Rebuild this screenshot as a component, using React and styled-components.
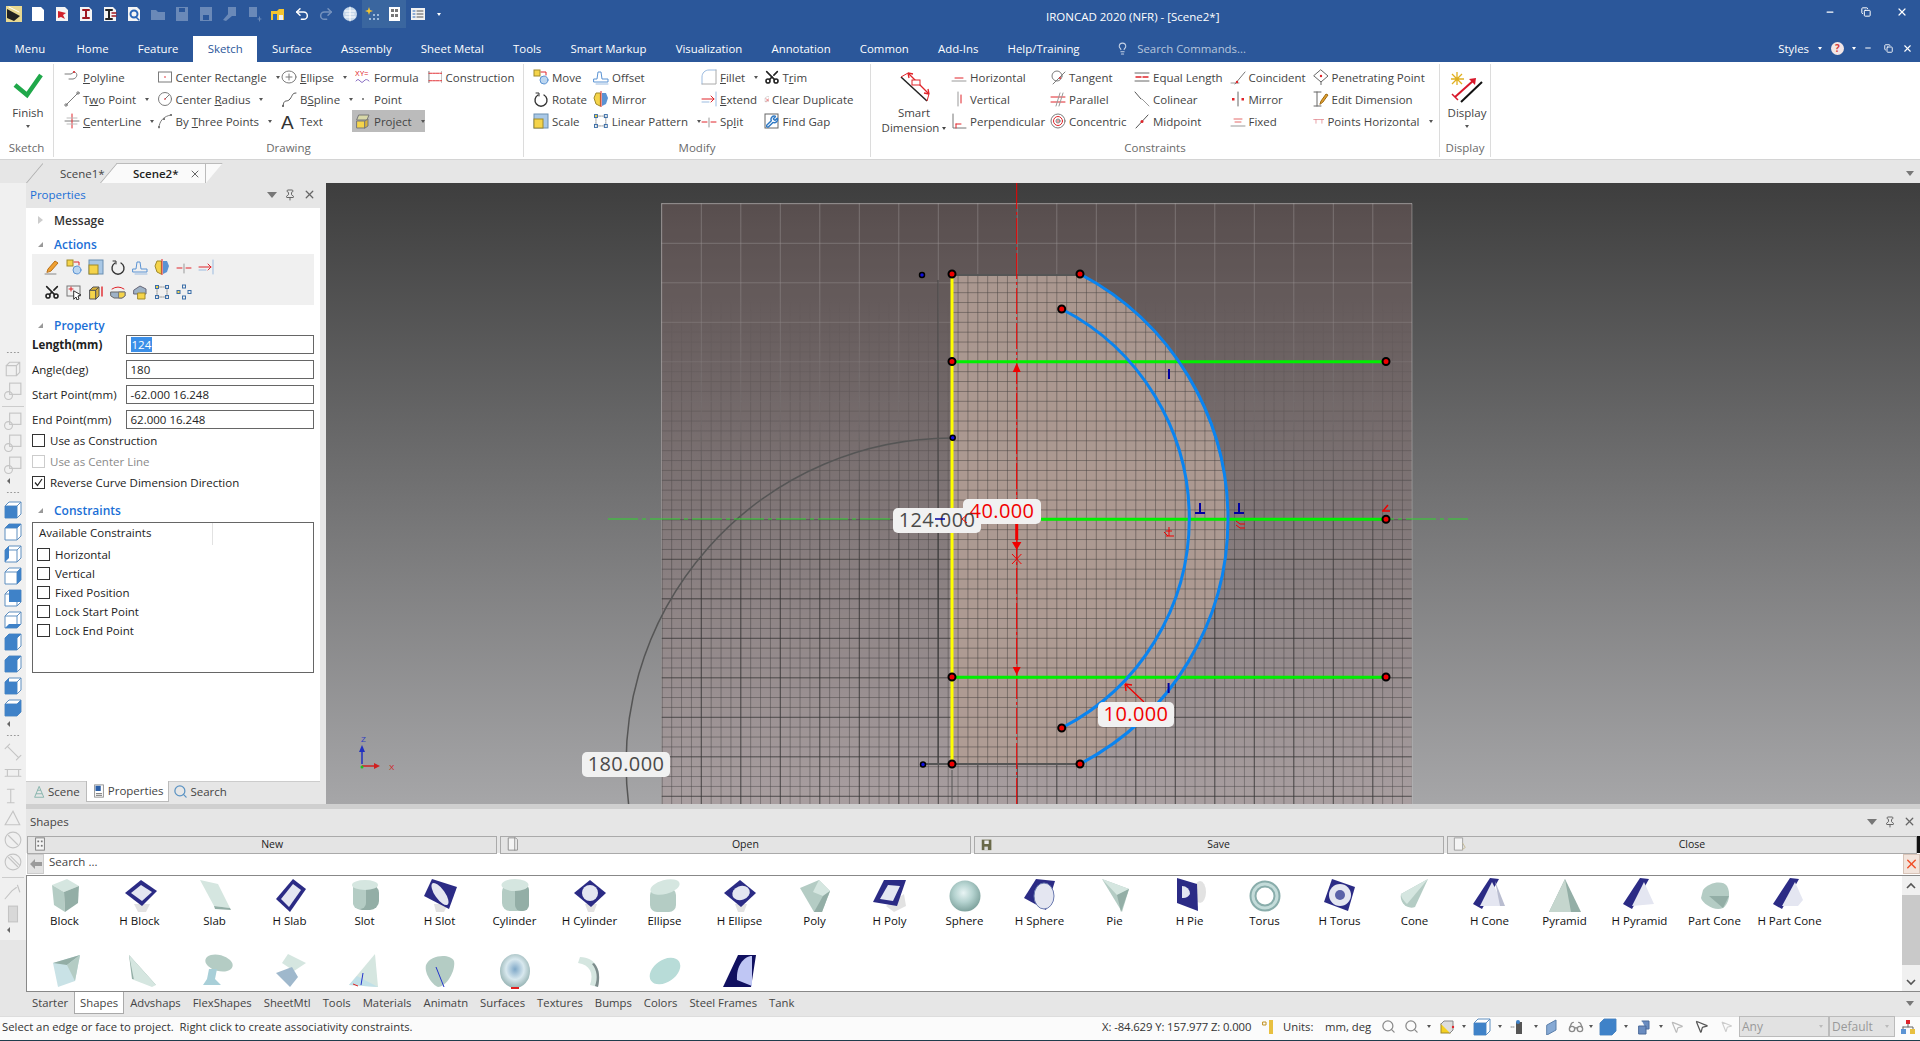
import React from "react";
import styled, { createGlobalStyle } from "styled-components";
import { Scissors, Wrench, Search, Pin, X, Lightbulb, Minus, Copy, Undo2, Redo2, Glasses, MousePointer2 } from "lucide-react";

const FONT = `"Open Sans", "Liberation Sans", sans-serif`;
const BLUE = "#2b579a";
const LINK = "#1a6fd6";

const GlobalStyle = createGlobalStyle`
  html, body { margin: 0; padding: 0; overflow: hidden; background: #e6e6e6; }
  body { font-family: ${FONT}; font-size: 11.5px; color: #333; }
  * { box-sizing: border-box; }
  u { text-underline-offset: 1px; }
`;

const Shell = styled.div`
  width: 1920px;
  height: 1041px;
  display: flex;
  flex-direction: column;
  overflow: hidden;
  border-bottom: 1px solid #1f3d4d;
`;

/* title bar */
const TitleBar = styled.div`
  height: 36px;
  flex: none;
  background: ${BLUE};
  color: #fff;
  display: grid;
  grid-template-columns: 1046px 1fr auto;
  align-items: center;
`;
const QuickBar = styled.div`
  display: flex;
  align-items: center;
  height: 28px;
  margin-bottom: 8px;
  padding-left: 2px;
`;
const QuickBtn = styled.div`
  width: ${({ $w }) => $w || 24}px;
  height: 28px;
  display: flex;
  align-items: center;
  justify-content: center;
  opacity: ${({ $faded }) => ($faded ? 0.35 : 1)};
  background: ${({ $on }) => ($on ? "#3a669f" : "transparent")};
`;
const WindowTitle = styled.div`
  font-size: 11.5px;
  margin-top: -3px;
`;
const WindowBtns = styled.div`
  display: flex;
  margin-top: -12px;
`;
const WinBtn = styled.div`
  width: ${({ $w }) => $w || 36}px;
  height: 20px;
  display: flex;
  align-items: center;
  justify-content: center;
`;

/* ribbon tabs */
const TabBar = styled.div`
  height: 26px;
  flex: none;
  background: ${BLUE};
  color: #fff;
  display: flex;
  align-items: stretch;
`;
const RibbonTab = styled.div`
  padding: 0 14.6px 2px;
  display: flex;
  align-items: center;
  font-size: 11.4px;
  white-space: nowrap;
  margin-right: ${({ $mr }) => $mr || 0}px;
  background: ${({ $active }) => ($active ? "#fff" : "transparent")};
  color: ${({ $active }) => ($active ? BLUE : "#fff")};
`;
const CommandSearch = styled.div`
  display: flex;
  align-items: center;
  gap: 8px;
  margin-left: 22px;
  padding-bottom: 2px;
  font-size: 11.4px;
  color: #b7c6dc;
`;
const TabRight = styled.div`
  margin-left: auto;
  display: flex;
  align-items: center;
  font-size: 11.4px;
  padding: 0 2px 2px 0;
`;
const HelpDot = styled.div`
  width: 13px;
  height: 13px;
  border-radius: 50%;
  background: #f3e6e6;
  color: #d33a3a;
  font-size: 10px;
  font-weight: 700;
  line-height: 13px;
  text-align: center;
  margin: 0 8px 0 9px;
`;
const Caret = styled.span`
  display: inline-block;
  flex: none;
  width: 0;
  height: 0;
  vertical-align: middle;
  margin-left: ${({ $gap }) => ($gap === undefined ? 6 : $gap)}px;
  margin-top: ${({ $mt }) => $mt || 0}px;
  border-left: ${({ $size }) => $size || 2.5}px solid transparent;
  border-right: ${({ $size }) => $size || 2.5}px solid transparent;
  border-top: ${({ $size }) => ($size ? $size + 1 : 3)}px solid ${({ $c }) => $c || "#555"};
`;

/* ribbon */
const Ribbon = styled.div`
  height: 98px;
  flex: none;
  background: #fff;
  display: flex;
  border-bottom: 1px solid #d4d4d4;
  padding-bottom: 2px;
`;
const Group = styled.div`
  width: ${({ $w }) => $w}px;
  flex: none;
  display: flex;
  flex-direction: column;
  margin-top: 2px;
  border-right: 1px solid #dcdcdc;
`;
const GroupBody = styled.div`
  height: 74px;
  flex: none;
  display: flex;
  padding: 2px 0 0 ${({ $pad }) => $pad || 0}px;
`;
const GroupLabel = styled.div`
  height: 20px;
  text-align: center;
  color: #6a6a6a;
  line-height: 20px;
`;
const Col = styled.div`
  width: ${({ $w }) => $w}px;
  flex: none;
  display: flex;
  flex-direction: column;
`;
const Cmd = styled.div`
  height: 22px;
  display: flex;
  align-items: center;
  gap: 3px;
  white-space: nowrap;
  color: #444;
  background: ${({ $on }) => ($on ? "#bbbbbb" : "transparent")};
  margin-left: ${({ $on }) => ($on ? -3 : 0)}px;
  padding-left: ${({ $on }) => ($on ? 3 : 0)}px;
  margin-right: ${({ $on }) => ($on ? 3 : 0)}px;
`;
const BigCmd = styled.div`
  width: ${({ $w }) => $w}px;
  flex: none;
  display: flex;
  flex-direction: column;
  align-items: center;
  padding-top: 1px;
  line-height: 15px;
  color: #444;
  white-space: nowrap;
`;
const BigIcon = styled.div`
  height: 38px;
  flex: none;
`;

/* document tabs */
const DocStrip = styled.div`
  height: 23px;
  flex: none;
  background: #e6e6e6;
  display: flex;
  align-items: flex-end;
  padding-left: 26px;
  position: relative;
`;
const DocTab = styled.div`
  position: relative;
  height: 20px;
  width: ${({ $w }) => $w}px;
  display: flex;
  align-items: center;
  padding-left: ${({ $pl }) => $pl}px;
  color: ${({ $active }) => ($active ? "#222" : "#444")};
  font-weight: ${({ $active }) => ($active ? 600 : 400)};
  &::before {
    content: "";
    position: absolute;
    inset: 0;
    transform-origin: bottom left;
    transform: skewX(-40deg);
    border-left: 1px solid #aaa;
    border-top: 1px solid ${({ $active }) => ($active ? "#bbb" : "transparent")};
    background: ${({ $active }) => ($active ? "#fafafa" : "transparent")};
  }
  &::after {
    content: "";
    display: ${({ $active }) => ($active ? "block" : "none")};
    position: absolute;
    top: 0;
    bottom: 0;
    left: 50%;
    right: 0;
    background: #fafafa;
    border-top: 1px solid #bbb;
    border-right: 1px solid #bbb;
  }
`;
const DocText = styled.span`
  position: relative;
  z-index: 1;
`;
const DocClose = styled.span`
  position: absolute;
  z-index: 1;
  right: 5px;
  top: 5px;
  display: flex;
`;
const StripCaret = styled.div`
  position: absolute;
  display: flex;
  right: 6px;
  top: ${({ $top }) => $top}px;
`;

/* work area */
const Work = styled.div`
  flex: 1;
  display: flex;
  min-height: 0;
`;
const LeftStrip = styled.div`
  width: 26px;
  flex: none;
  background: #e6e6e6;
`;
const ToolColumn = styled.div`
  height: 757px;
  background: #f0f0f0;
  padding-top: 163px;
  display: flex;
  flex-direction: column;
  align-items: center;
`;
const ToolDots = styled.div`
  width: 14px;
  height: 12px;
  flex: none;
  margin-bottom: ${({ $mb }) => $mb || 0}px;
  background: radial-gradient(circle, #999 0.8px, transparent 1px) 0 center / 3.5px 3px repeat-x;
`;
const ToolBtn = styled.div`
  width: 22px;
  height: 22px;
  flex: none;
  display: flex;
  align-items: center;
  justify-content: center;
`;
const ToolSep = styled.div`
  width: 22px;
  height: 8px;
  flex: none;
  background: linear-gradient(#ccc, #ccc) center / 100% 1px no-repeat;
`;
const ToolArrow = styled.div`
  height: 10px;
  flex: none;
  width: 14px;
  display: flex;
  align-items: center;
  justify-content: flex-start;
  &::before {
    content: "";
    border-top: 3px solid transparent;
    border-bottom: 3px solid transparent;
    border-right: 3px solid #666;
    margin-left: 1px;
  }
`;
const Content = styled.div`
  flex: 1;
  display: flex;
  flex-direction: column;
  min-width: 0;
`;
const TopRow = styled.div`
  height: 626px;
  flex: none;
  display: flex;
  border-bottom: 5px solid #cfcfcf;
`;

/* properties */
const PropsPanel = styled.div`
  width: 300px;
  flex: none;
  background: #e6e6e6;
  padding-right: 6px;
  display: flex;
  flex-direction: column;
`;
const PanelHead = styled.div`
  height: ${({ $h }) => $h || 25}px;
  flex: none;
  display: flex;
  align-items: center;
  padding: 0 0 2px 4px;
  color: ${({ $c }) => $c || "#444"};
`;
const PanelBtns = styled.div`
  margin-left: auto;
  display: flex;
  align-items: center;
  gap: 7px;
  padding-right: 4px;
`;
const PropsBody = styled.div`
  flex: 1;
  background: #fff;
  padding: 2px 6px 0;
  display: flex;
  flex-direction: column;
`;
const SectionHead = styled.div`
  height: ${({ $h }) => $h || 20}px;
  flex: none;
  margin-top: ${({ $mt }) => $mt || 0}px;
  display: flex;
  align-items: center;
  font-weight: 600;
  font-size: 12px;
  padding-left: 4px;
  gap: 10px;
  color: ${({ $plain }) => ($plain ? "#333" : LINK)};
`;
const Tri = styled.span`
  width: 0;
  height: 0;
  flex: none;
  ${({ $open }) =>
    $open
      ? `border-left: 5px solid transparent; border-bottom: 5px solid #999; margin-left: 2px; margin-right: 1px;`
      : `border-top: 4px solid transparent; border-bottom: 4px solid transparent; border-left: 5px solid #ccc; margin-left: 2px; margin-right: 1px;`}
`;
const ActionBar = styled.div`
  height: 51px;
  flex: none;
  background: #f0f0f0;
  display: grid;
  grid-template-columns: repeat(8, 22px);
  grid-auto-rows: 25px;
  padding-left: 9px;
  align-items: center;
  justify-items: center;
`;
const FieldRow = styled.div`
  height: 19px;
  flex: none;
  display: flex;
  align-items: center;
  margin-bottom: 6px;
  font-weight: ${({ $bold }) => ($bold ? 700 : 400)};
  color: #222;
`;
const FieldLabel = styled.div`
  width: 93.5px;
  flex: none;
  white-space: nowrap;
`;
const FieldBox = styled.div`
  flex: 1;
  height: 19px;
  border: 1px solid #666;
  display: flex;
  align-items: center;
  padding-left: 4px;
  font-weight: 400;
  background: #fff;
`;
const Selected = styled.span`
  background: #3b8fe8;
  color: #fff;
  padding: 0 1px;
`;
const CheckGroup = styled.div`
  margin-top: -5px;
  flex: none;
`;
const CheckRow = styled.div`
  height: 21px;
  display: flex;
  align-items: center;
  gap: 5px;
  color: ${({ $off }) => ($off ? "#8a8a8a" : "#222")};
`;
const Check = styled.span`
  width: 13px;
  height: 13px;
  flex: none;
  border: 1px solid ${({ $off }) => ($off ? "#ccc" : "#333")};
  background: #fff;
  display: flex;
  align-items: center;
  justify-content: center;
`;
const ConstraintBox = styled.div`
  height: 151px;
  flex: none;
  margin-top: 1.5px;
  border: 1px solid #666;
  color: #222;
`;
const BoxHead = styled.div`
  height: 22.5px;
  width: 180px;
  display: flex;
  align-items: center;
  padding: 0 0 2px 6px;
  border-right: 1px solid #e2e2e2;
`;
const BoxRow = styled.div`
  height: 19px;
  display: flex;
  align-items: center;
  gap: 5px;
  padding-left: 4px;
`;
const PanelTabs = styled.div`
  height: 23px;
  flex: none;
  display: flex;
  align-items: flex-start;
  padding-left: 4px;
  border-top: 1px solid #ccc;
  color: #444;
`;
const PanelTab = styled.div`
  height: 21px;
  display: flex;
  align-items: center;
  gap: 2px;
  padding: 0 5px 1px ${({ $pl }) => $pl || 5}px;
  margin-top: ${({ $active }) => ($active ? -1 : 0)}px;
  background: ${({ $active }) => ($active ? "#fff" : "transparent")};
  border: 1px solid ${({ $active }) => ($active ? "#bbb" : "transparent")};
  border-top: 0;
`;

/* viewport */
const Viewport = styled.div`
  flex: 1;
  position: relative;
  overflow: hidden;
  background: linear-gradient(#3e3e3e, #a6a6a8);
`;
const SceneSvg = styled.svg`
  position: absolute;
  inset: 0;
  display: block;
  z-index: ${({ $top }) => ($top ? 3 : 0)};
`;
const DimLabel = styled.div`
  position: absolute;
  left: ${({ $x }) => $x - 326}px;
  top: ${({ $y }) => $y - 183}px;
  width: ${({ $w }) => $w}px;
  height: 25px;
  display: flex;
  align-items: center;
  justify-content: center;
  &::before {
    content: "";
    position: absolute;
    inset: 0;
    border-radius: 5px;
    background: #f1f1f1;
    z-index: 1;
  }
`;
const DimText = styled.span`
  position: relative;
  z-index: 2;
  top: -1.5px;
  font-size: 20px;
  letter-spacing: 0.4px;
  color: ${({ $c }) => $c || "#4a4a4a"};
`;

/* shapes panel */
const ShapesPanel = styled.div`
  flex: 1;
  display: flex;
  flex-direction: column;
  background: #e6e6e6;
`;
const ButtonRow = styled.div`
  height: 17px;
  flex: none;
  display: grid;
  grid-template-columns: repeat(4, 1fr);
  gap: 3px;
  padding-left: 1px;
  border-right: 3px solid #111;
`;
const LibButton = styled.div`
  position: relative;
  border: 1px solid #aaa;
  background: #e4e4e4;
  display: flex;
  align-items: center;
  justify-content: center;
  padding: 0 0 2px 20px;
  font-size: 10.5px;
  color: #222;
`;
const LibIcon = styled.span`
  position: absolute;
  left: 5px;
  top: 0;
  display: flex;
`;
const SearchRow = styled.div`
  height: 22px;
  flex: none;
  background: #fff;
  display: flex;
  align-items: center;
  gap: 5px;
  padding-left: 1px;
  color: #444;
`;
const SearchText = styled.span`
  position: relative;
  top: -3px;
`;
const BackBtn = styled.div`
  width: 17px;
  height: 20px;
  background: #e2e2e2;
  border: 1px solid #ccc;
  display: flex;
  align-items: center;
  justify-content: center;
`;
const ClearBtn = styled.div`
  margin-left: auto;
  width: 17px;
  height: 20px;
  background: #f2e4dc;
  border: 1px solid #d8c4b8;
  display: flex;
  align-items: center;
  justify-content: center;
`;
const ShapeArea = styled.div`
  height: 117px;
  flex: none;
  background: #fff;
  display: flex;
  border-top: 1px solid #888;
  border-bottom: 1px solid #888;
  border-left: 1px solid #888;
  overflow: hidden;
`;
const ShapeGrid = styled.div`
  flex: 1;
  display: grid;
  grid-template-columns: repeat(24, 75px);
  grid-auto-rows: 75px;
`;
const ShapeItem = styled.div`
  display: flex;
  flex-direction: column;
  align-items: center;
  font-size: 11.5px;
  color: #111;
  white-space: nowrap;
  line-height: 15px;
`;
const ShapeArt = styled.svg`
  display: block;
  flex: none;
  margin-bottom: -3px;
`;
const ScrollBar = styled.div`
  width: 18px;
  flex: none;
  background: #f0f0f0;
  display: flex;
  flex-direction: column;
  align-items: center;
`;
const ScrollArrow = styled.div`
  height: 19px;
  flex: none;
  display: flex;
  align-items: center;
  margin-top: ${({ $end }) => ($end ? "auto" : 0)};
`;
const ScrollThumb = styled.div`
  width: 100%;
  height: 70px;
  flex: none;
  background: #c9c9c9;
`;
const LibTabs = styled.div`
  height: 24px;
  flex: none;
  display: flex;
  align-items: flex-start;
  color: #444;
  font-size: 11.3px;
  position: relative;
`;
const LibTab = styled.div`
  height: 22px;
  display: flex;
  align-items: center;
  padding: 0 5px;
  background: ${({ $active }) => ($active ? "#fff" : "transparent")};
  border: 1px solid ${({ $active }) => ($active ? "#aaa" : "transparent")};
  border-top: 0;
`;

/* status bar */
const StatusBar = styled.div`
  height: 24px;
  flex: none;
  background: #fbfbfb;
  border-top: 1px solid #ddd;
  display: flex;
  align-items: center;
  padding: 0 0 4px 2px;
  color: #333;
  font-size: 11.3px;
  white-space: nowrap;
`;
const StatusRight = styled.div`
  margin-left: auto;
  display: flex;
  align-items: center;
`;
const StatusCell = styled.div`
  width: ${({ $w }) => $w}px;
  flex: none;
  display: flex;
  align-items: center;
  justify-content: ${({ $left }) => ($left ? "flex-start" : "center")};
  letter-spacing: ${({ $tight }) => ($tight ? "-0.1px" : "normal")};
`;
const SelectBox = styled.div`
  width: ${({ $w }) => $w}px;
  height: 21px;
  flex: none;
  background: #e2e2e2;
  border: 1px solid #bbb;
  color: #999;
  display: flex;
  align-items: center;
  justify-content: space-between;
  padding: 0 5px 0 2px;
  font-size: 12px;
`;

/* drawings */
const Svg = ({ s = 16, v = 16, children }) => (
  <svg width={s} height={s} viewBox={`0 0 ${v} ${v}`} fill="none" strokeLinecap="round">
    {children}
  </svg>
);
const G = "#7b7b7b";
const R = "#e0242a";
const Y = "#f5d44a";
const B = "#5b93d3";

const ICON = {
  polyline: <><path d="M1 5h6l3-2" stroke={G} /><path d="M10 3c4 0 4 6-1 7H5" stroke={G} /><circle cx="10" cy="3" r="1" fill={R} /></>,
  twoPoint: <><path d="M2 14L14 2" stroke={G} /><circle cx="2" cy="14" r="1.2" stroke={G} /><circle cx="14" cy="2" r="1.2" stroke={G} /></>,
  centerLine: <><path d="M1 8h14" stroke={G} /><path d="M8 1v14" stroke={R} /><path d="M3 5h10M3 11h10" stroke="#bbb" /></>,
  centerRect: <><rect x="1.5" y="3" width="13" height="10" stroke={G} /><circle cx="8" cy="8" r="0.8" fill={R} /></>,
  centerRadius: <><circle cx="8" cy="8" r="6.5" stroke={G} /><path d="M8 8l4-4" stroke={G} /><circle cx="8" cy="8" r="0.8" fill={R} /></>,
  threePoints: <><path d="M2 15C2 8 7 3 14 2" stroke={G} /><rect x="1" y="13" width="2" height="2" fill={G} /><rect x="6" y="5" width="2" height="2" fill={G} /><rect x="13" y="1" width="2" height="2" fill={G} /></>,
  ellipse: <><ellipse cx="8" cy="8" rx="7" ry="6" stroke={G} /><path d="M5 8h6M8 5v6" stroke={G} /></>,
  bspline: <><path d="M2 15C3 7 6 12 9 8s2-6 6-6" stroke="#555" /><circle cx="2" cy="15" r="1" fill="#555" /></>,
  formula: <><text x="0" y="7" fontSize="7" fill={R} fontFamily="Liberation Sans">XY=</text><path d="M1 12q2-3 4 0t4 0 5 0" stroke="#8a6fc4" /></>,
  point: <circle cx="8" cy="8" r="1" fill="#666" />,
  text: <text x="0" y="16" fontSize="19" fill="#333" fontFamily="Liberation Sans">A</text>,
  project: <><path d="M4 2h10l-2 5H2z" stroke="#777" fill="#d8d8a8" /><path d="M2 8h8v7H2z" fill={Y} stroke="#777" /><path d="M10 8l3-2v7l-3 2z" fill="#d9b23a" stroke="#777" /></>,
  construction: <><path d="M1 2v12M15 2v12" stroke={G} /><path d="M1 4h14M1 12h14" stroke={R} strokeDasharray="3 1" /></>,
  move: <><rect x="1" y="1" width="6" height="6" fill={Y} stroke="#a08a2a" /><circle cx="11" cy="11" r="4" fill="#bcd6f0" stroke={B} /><path d="M8 3h5v3" stroke={R} /></>,
  rotate: <><path d="M5 4a6 6 0 1 0 6 0" stroke="#333" strokeWidth="1.4" /><path d="M3 2h3v3" stroke="#333" /></>,
  scale: <><rect x="1" y="1" width="14" height="14" fill="#a9c8e6" stroke="#6b8fb2" /><rect x="1" y="6" width="9" height="9" fill={Y} stroke="#a08a2a" /></>,
  offset: <><path d="M1 13h14v-3H9L8 3H5L4 10H1z" stroke={B} /><path d="M3 15h12" stroke="#9bbbe0" /></>,
  mirror: <><path d="M7 2H3L1 7l2 6 4 2z" fill={Y} stroke="#a08a2a" /><path d="M9 2h4l2 5-2 6-4 2z" fill={B} /><path d="M8 0v16" stroke={R} /></>,
  pattern: <><path d="M4 3h8M4 13h8M3 4v8M13 4v8" stroke="#999" strokeDasharray="1.5 1" /><rect x="1.5" y="1.5" width="3" height="3" stroke="#3b6ea8" fill="#f5d44a" /><rect x="11.5" y="1.5" width="3" height="3" stroke="#3b6ea8" /><rect x="1.5" y="11.5" width="3" height="3" stroke="#3b6ea8" /><rect x="11.5" y="11.5" width="3" height="3" stroke="#3b6ea8" /></>,
  patternRound: <><rect x="6.500" y="1" width="3" height="3" stroke="#3b6ea8" /><rect x="1" y="6.500" width="3" height="3" stroke="#3b6ea8" fill="#f5d44a" /><rect x="12" y="6.500" width="3" height="3" stroke="#3b6ea8" /><rect x="6.500" y="12" width="3" height="3" stroke="#3b6ea8" /></>,
  fillet: <><path d="M1 15V8c0-4 3-7 7-7h7" stroke="#9bbbe0" /><path d="M15 1v14H1" stroke="#aaa" /></>,
  extend: <><path d="M1 8h12" stroke={R} /><path d="M10 5l3 3-3 3" stroke={R} /><path d="M15 1v14" stroke="#9bbbe0" /><path d="M1 11h7" stroke="#9bbbe0" /></>,
  split: <><path d="M1 9h5M10 9h5" stroke={R} /><path d="M8 5v9" stroke="#999" /></>,
  trim: <g transform="rotate(-90 8 8)"><g transform="scale(0.667)"><Scissors size={24} color="#222" strokeWidth={2.4} /></g></g>,
  clearDup: <><path d="M3 15V5l6-4h6v9l-5 5z" stroke="#999" /><path d="M6 7l8 8M14 7l-8 8" stroke={R} strokeWidth="1.6" /></>,
  findGap: <><rect x="1" y="1" width="13" height="14" stroke="#666" /><g transform="translate(1.5 2) scale(0.6)"><Wrench size={22} color="#2f79c4" strokeWidth={2.6} /></g></>,
  horizontal: <><path d="M1 12h14" stroke="#999" /><path d="M4 9h8" stroke={R} /></>,
  vertical: <><path d="M7 1v14" stroke="#999" /><path d="M10 4v8" stroke={R} /></>,
  perpendicular: <><path d="M2 1v14h13" stroke="#777" /><path d="M5 11h5M5 15v-4" stroke={R} /></>,
  tangent: <><circle cx="7" cy="7" r="5" stroke={G} /><path d="M3 15L15 3" stroke={G} /><circle cx="10" cy="9" r="1" fill={R} /></>,
  parallel: <><path d="M1 6h14M1 11h14" stroke={R} /><path d="M6 15L10 2M9 15l4-13" stroke="#999" /></>,
  concentric: <><circle cx="8" cy="8" r="7" stroke={G} /><circle cx="8" cy="8" r="4.5" stroke={R} /><circle cx="8" cy="8" r="2" stroke={G} /><circle cx="8" cy="8" r="0.8" fill={R} /></>,
  equal: <><path d="M1 4h14M1 12h14" stroke="#666" /><path d="M2 8h5M9 8h5" stroke={R} strokeWidth="1.4" /></>,
  colinear: <><path d="M1 1l6 7" stroke="#555" /><path d="M8 8l7 7" stroke="#999" /></>,
  midpoint: <><path d="M2 15L14 2" stroke="#555" /><circle cx="8" cy="8.5" r="1.5" fill={R} /></>,
  coincident: <><path d="M1 14h8" stroke="#999" /><path d="M5 15L15 3" stroke="#777" /><circle cx="7" cy="13" r="1.2" fill={R} /></>,
  mirrorC: <><path d="M8 1v14" stroke="#666" /><rect x="2" y="7" width="2.5" height="2.5" fill={R} /><rect x="11.5" y="7" width="2.5" height="2.5" fill={R} /></>,
  fixed: <><path d="M1 13h14" stroke="#999" /><path d="M5 9h6M4 6h8" stroke="#e46b6b" /></>,
  penetrating: <><path d="M8 1l7 6-7 6-7-6z" stroke="#666" /><circle cx="8" cy="7" r="1.2" fill={R} /><path d="M8 13v3" stroke="#666" /></>,
  editDim: <><path d="M1 1h7M1 15h7M4 1v14" stroke="#666" /><path d="M7 13l1-3 5-7 2 1-5 7z" fill="#e0a030" stroke="#a06a10" /></>,
  pointsH: <><path d="M1 6h14" stroke="#e0838a" /><path d="M4 6v5M12 6v5" stroke="#e0838a" /></>,
  pencil: <><path d="M1 15h11" stroke="#888" /><path d="M3 13l1-3 7-8 3 2-7 8z" fill="#f0a030" stroke="#b87018" /></>,
  pickBox: <><rect x="1" y="2" width="13" height="10" stroke="#777" /><path d="M3 5h4M5 3v4" stroke={R} /><path d="M8 7l7 4-3 1 1 3-2 1-1-3-2 2z" fill="#fff" stroke="#333" /></>,
  extrude: <><path d="M2 6h6v9H2z" fill={Y} stroke="#555" /><path d="M8 6l3-3v9l-3 3zM2 6l3-3h6l-3 3z" fill="#d9b23a" stroke="#555" /><path d="M14 12V3" stroke={R} strokeWidth="1.4" /></>,
  revolve: <><path d="M1 8h14v4l-3 2H4l-3-2z" fill="#9eb2c6" stroke="#666" /><path d="M9 8h6v4l-3 2H9z" fill={Y} stroke="#777" /><path d="M2 5q6-4 12 0" stroke={R} /></>,
  blend: <><path d="M2 6l6-4 6 3v5H2z" fill="#9eb2c6" stroke="#667" /><path d="M6 9h7v6H6z" fill={Y} stroke="#a08a2a" /></>,
};
const Ico = ({ n }) => <Svg>{ICON[n]}</Svg>;

const DRAWING = [
  { w: 92.5, items: [["polyline", <><u>P</u>olyline</>], ["twoPoint", <>T<u>w</u>o Point</>, true], ["centerLine", <><u>C</u>enterLine</>, true]] },
  { w: 124.5, items: [["centerRect", "Center Rectangle", true], ["centerRadius", <>Center <u>R</u>adius</>, true], ["threePoints", <>By <u>T</u>hree Points</>, true]] },
  { w: 74, items: [["ellipse", <><u>E</u>llipse</>, true], ["bspline", <>B<u>S</u>pline</>, true], ["text", "Text"]] },
  { w: 72.5, items: [["formula", "Formula"], ["point", "Point"], ["project", "Project", true, true]] },
  { w: 87, items: [["construction", "Construction"]] },
];
const MODIFY = [
  { w: 60, items: [["move", "Move"], ["rotate", "Rotate"], ["scale", "Scale"]] },
  { w: 108, items: [["offset", "Offset"], ["mirror", "Mirror"], ["pattern", "Linear Pattern", true]] },
  { w: 62.5, items: [["fillet", <><u>F</u>illet</>, true], ["extend", <><u>E</u>xtend</>], ["split", <>Sp<u>l</u>it</>]] },
  { w: 90, items: [["trim", <>T<u>r</u>im</>], ["clearDup", "Clear Duplicate"], ["findGap", "Find Gap"]] },
];
const CONSTRAINTS = [
  { w: 99, items: [["horizontal", "Horizontal"], ["vertical", "Vertical"], ["perpendicular", "Perpendicular"]] },
  { w: 84, items: [["tangent", "Tangent"], ["parallel", "Parallel"], ["concentric", "Concentric"]] },
  { w: 95.5, items: [["equal", "Equal Length"], ["colinear", "Colinear"], ["midpoint", "Midpoint"]] },
  { w: 83, items: [["coincident", "Coincident"], ["mirrorC", "Mirror"], ["fixed", "Fixed"]] },
  { w: 120, items: [["penetrating", "Penetrating Point"], ["editDim", "Edit Dimension"], ["pointsH", "Points Horizontal", true]] },
];
const ACTIONS = ["pencil", "move", "scale", "rotate", "offset", "mirror", "split", "extend", "trim", "pickBox", "extrude", "revolve", "blend", "pattern", "patternRound"];

const CmdCols = ({ cols }) =>
  cols.map((col, i) => (
    <Col key={i} $w={col.w}>
      {col.items.map(([icon, label, caret, on], j) => (
        <Cmd key={j} $on={on}>
          <Ico n={icon} />
          <span>{label}</span>
          {caret && <Caret />}
        </Cmd>
      ))}
    </Col>
  ));

const QUICK = [
  { k: "logo", art: <><rect width="16" height="16" fill="#e8d890" /><path d="M1 3l13 7-6 5-7-3z" fill="#222" /><path d="M3 1l10 5" stroke="#fff" /></> },
  { k: "new", art: <path d="M2 1h9l3 3v11H2z" fill="#fff" /> },
  { k: "a", art: <><path d="M2 1h9l3 3v11H2z" fill="#f4f4f4" /><path d="M4 5l8 2-3 2 2 4-4-2-3 1z" fill="#d0202a" /></> },
  { k: "b", art: <><path d="M2 1h9l3 3v11H2z" fill="#f4f4f4" /><path d="M5 4h6M8 4v8M5 12h6" stroke="#a01820" strokeWidth="2" /></> },
  { k: "c", art: <><path d="M2 1h9l3 3v11H2z" fill="#f4f4f4" /><path d="M4 4h6M7 4v9M4 13h6" stroke="#222" strokeWidth="2" /><path d="M10 7h4M10 10h4" stroke="#a01820" strokeWidth="1.4" /></> },
  { k: "d", art: <><path d="M2 1h9l3 3v11H2z" fill="#f4f4f4" /><circle cx="8" cy="8" r="3.5" stroke="#2a66b8" strokeWidth="2" /><path d="M10 11l3 3" stroke="#2a66b8" strokeWidth="1.5" /></> },
  { k: "e", faded: true, art: <path d="M1 4h5l2 2h7v8H1z" fill="#dfe6f2" /> },
  { k: "f", faded: true, art: <><rect x="2" y="1" width="12" height="14" fill="#dfe6f2" /><rect x="5" y="2" width="6" height="4" fill="#2b579a" /></> },
  { k: "g", faded: true, art: <><rect x="2" y="1" width="12" height="14" fill="#dfe6f2" /><rect x="5" y="9" width="6" height="5" fill="#2b579a" /></> },
  { k: "h", faded: true, art: <><rect x="6" y="1" width="8" height="9" fill="#dfe6f2" /><path d="M1 14l6-7 3 3-6 5z" fill="#dfe6f2" /></> },
  { k: "i", faded: true, art: <><rect x="3" y="1" width="8" height="10" fill="#dfe6f2" /><path d="M12 13h3M13.500 11v4" stroke="#dfe6f2" /></> },
  { k: "j", art: <><path d="M1 5h6l2-2h5v11H1z" fill="#f4c430" /><rect x="3" y="8" width="4" height="6" fill="#2a66b8" /><rect x="9" y="9" width="4" height="5" fill="#eee" /></> },
  { k: "undo", art: <Undo2 size={16} color="#fff" strokeWidth={2.2} /> },
  { k: "redo", faded: true, art: <Redo2 size={16} color="#fff" strokeWidth={2.2} /> },
  { k: "k", art: <><circle cx="8" cy="8" r="7" fill="#c7d8ea" /><path d="M3 5h10M3 11h10M8 1v14M4 8h8" stroke="#fff" /></> },
  { k: "l", on: true, w: 22, art: <><path d="M4 1l1 3 3 1-3 1-1 3-1-3-3-1 3-1z" fill="#f4c430" /><g fill="#bcd6f0"><circle cx="9" cy="9" r="1" /><circle cx="13" cy="9" r="1" /><circle cx="5" cy="13" r="1" /><circle cx="9" cy="13" r="1" /><circle cx="13" cy="13" r="1" /></g></> },
  { k: "m", on: true, w: 22, art: <><rect x="2" y="1" width="11" height="14" fill="#fff" /><g fill="#777"><rect x="4" y="3" width="3" height="3" /><rect x="8" y="3" width="3" height="3" /><rect x="4" y="8" width="3" height="3" /><rect x="8" y="8" width="3" height="3" /></g></> },
  { k: "n", art: <><rect x="1" y="2" width="14" height="12" fill="#f2f2f2" /><path d="M3 5h2M3 8h2M3 11h2" stroke="#2a66b8" /><path d="M7 5h6M7 8h6M7 11h6" stroke="#555" /></> },
];

const Cube = ({ faces = [] }) => (
  <svg width="18" height="18" viewBox="0 0 18 18">
    <path d="M1 5h12v12H1zM1 5l4-4h12v12l-4 4M13 5l4-4" fill="#fff" stroke="#5f8fc0" />
    {faces.includes("front") && <path d="M1 5h12v12H1z" fill="#3f82c8" />}
    {faces.includes("top") && <path d="M1 5l4-4h12l-4 4z" fill="#3f82c8" />}
    {faces.includes("right") && <path d="M13 5l4-4v12l-4 4z" fill="#3f82c8" />}
    {faces.includes("left") && <path d="M1 5l4-4v12l-4 4z" fill="#3f82c8" />}
    {faces.includes("bottom") && <path d="M1 17l4-4h12l-4 4z" fill="#3f82c8" />}
    {faces.includes("back") && <path d="M5 1h12v12H5z" fill="#3f82c8" />}
  </svg>
);
const Ghost = ({ d }) => (
  <Svg s={18}>
    <g stroke="#c4c4c4" fill="none">
      {d}
    </g>
  </Svg>
);
const GhostBox = (
  <>
    <rect x="5" y="1" width="10" height="10" />
    <circle cx="4" cy="12" r="3.5" />
  </>
);

const ArtP = ({ d, c }) => <polygon points={d} fill={c} />;
const T1 = "#d5e6e0";
const T2 = "#b4ccc4";
const T3 = "#93aea6";
const NV = "#2b2b85";
const HOLE = "#e4e6f1";

const ART = {
  Block: <><ArtP d="7,9 22,3 34,10 19,16" c={T1} /><ArtP d="7,9 19,16 20,36 9,29" c={T2} /><ArtP d="19,16 34,10 33,27 20,36" c={T3} /></>,
  "H Block": <><ArtP d="14,28 30,28 26,36 18,36" c="#e2e2e2" /><ArtP d="21,4 37,15 22,30 5,17" c={NV} /><ArtP d="21,9 32,16 22,25 11,17" c={HOLE} /></>,
  Slab: <><ArtP d="5,4 23,8 35,32 19,30" c={T1} /><ArtP d="19,30 35,32 36,34 20,33" c={T3} /></>,
  "H Slab": <><ArtP d="23,3 36,13 20,36 6,23" c={NV} /><ArtP d="23,8 31,14 19,31 11,23" c={HOLE} /></>,
  Slot: <><rect x="8" y="8" width="26" height="26" rx="9" fill={T3} /><rect x="8" y="6" width="13" height="27" rx="6" fill={T2} /><ellipse cx="20" cy="9" rx="13" ry="5" fill={T1} /></>,
  "H Slot": <><ArtP d="14,28 28,28 24,36 16,36" c="#e2e2e2" /><ArtP d="12,3 37,11 29,33 4,20" c={NV} /><ellipse cx="20" cy="18" rx="5" ry="13" transform="rotate(-35 20 18)" fill={HOLE} /></>,
  Cylinder: <><rect x="7" y="8" width="27" height="27" rx="8" fill={T2} /><rect x="20" y="8" width="14" height="27" rx="6" fill={T3} /><ellipse cx="20" cy="9" rx="13.500" ry="6" fill={T1} /></>,
  "H Cylinder": <><ArtP d="15,28 27,28 24,36 18,36" c="#e2e2e2" /><ArtP d="20,4 36,17 21,31 4,17" c={NV} /><circle cx="20" cy="17" r="8" fill={HOLE} /></>,
  Ellipse: <><rect x="5" y="12" width="26" height="24" rx="7" fill={T2} /><ellipse cx="20" cy="11" rx="15" ry="7" transform="rotate(-15 20 11)" fill={T1} /></>,
  "H Ellipse": <><ArtP d="15,28 27,28 24,36 18,36" c="#e2e2e2" /><ArtP d="20,4 36,17 21,31 4,17" c={NV} /><ellipse cx="21" cy="17" rx="9" ry="7" transform="rotate(-20 21 17)" fill={HOLE} /></>,
  Poly: <><ArtP d="5,12 24,4 35,15 27,36 19,36" c={T2} /><ArtP d="24,4 35,15 28,20 18,16" c={T1} /><ArtP d="28,20 35,15 27,36 19,36" c={T3} /></>,
  "H Poly": <><ArtP d="16,30 34,18 36,30 24,36" c="#e2e2e2" /><ArtP d="14,4 36,4 27,30 3,26" c={NV} /><ArtP d="18,9 30,10 23,25 10,23" c={HOLE} /></>,
  Sphere: <><defs><radialGradient id="sph1" cx="0.45" cy="0.4" r="0.6"><stop offset="0" stopColor="#e8f4f4" /><stop offset="0.5" stopColor="#b5d3d0" /><stop offset="1" stopColor="#7fa39e" /></radialGradient></defs><circle cx="20" cy="20" r="15.500" fill="url(#sph1)" /></>,
  "H Sphere": <><ArtP d="16,3 35,5 26,34 4,22" c={NV} /><ellipse cx="24" cy="20" rx="10" ry="13" fill={HOLE} stroke="#6a7ab0" /></>,
  Pie: <><ArtP d="7,3 34,13 27,36" c={T2} /><ArtP d="7,3 34,13 22,19" c={T1} /><ArtP d="22,19 34,13 26,36" c={T3} /></>,
  "H Pie": <><ellipse cx="30" cy="16" rx="6" ry="11" fill="#e2e2e2" /><ArtP d="7,2 27,8 28,35 7,27" c={NV} /><path d="M12 10a8 8 0 0 1 8 8 8 8 0 0 1-8 4z" fill={HOLE} /></>,
  Torus: <><circle cx="20" cy="20" r="12" fill="none" stroke="#89adab" strokeWidth="7" /><circle cx="20" cy="20" r="12" fill="none" stroke="#c4dcda" strokeWidth="3" /></>,
  "H Torus": <><ArtP d="12,3 35,11 28,35 4,26" c={NV} /><circle cx="20" cy="19" r="11" fill={HOLE} /><circle cx="20" cy="19" r="5" fill="#5a62a8" /></>,
  Cone: <><path d="M33 3L6 18c-2 8 6 16 14 13z" fill={T2} /><path d="M33 3L6 18c0 4 4 8 6 10z" fill={T1} /></>,
  "H Cone": <><ArtP d="20,2 29,3 12,33 3,28" c={NV} /><ArtP d="22,6 34,30 10,30" c={HOLE} /><ArtP d="25,5 35,30 30,30" c="#b9bdd0" /></>,
  Pyramid: <><ArtP d="20,3 36,36 4,36" c={T3} /><ArtP d="20,3 26,36 4,36" c="#c5d6ce" /></>,
  "H Pyramid": <><ArtP d="20,2 29,3 12,33 3,28" c={NV} /><ArtP d="24,6 34,28 12,30" c={HOLE} /></>,
  "Part Cone": <><path d="M8 14c6-8 20-10 24-4 4 7 2 18-4 22-8 4-20-4-22-10z" fill={T2} /><path d="M14 20l14 12 6-12z" fill={T3} /></>,
  "H Part Cone": <><ArtP d="20,2 29,3 12,33 3,28" c={NV} /><path d="M25 6l8 18-5 6-16 0z" fill={HOLE} /></>,
  w1: <><ArtP d="8,12 35,4 30,30 13,36" c="#c9e2e6" /><ArtP d="8,12 35,4 22,14" c={T3} /><ArtP d="22,14 35,4 30,30" c={T2} /></>,
  w2: <><ArtP d="9,4 36,34 12,28" c={T3} /><ArtP d="9,4 36,34 32,36 14,29" c={T1} /></>,
  w3: <><ellipse cx="24" cy="12" rx="14" ry="8" transform="rotate(15 24 12)" fill={T2} /><path d="M14 18l8 0-2 10 6 6H8l4-6z" fill="#a8cfd8" /></>,
  w4: <><ArtP d="18,3 36,12 24,20 12,12" c={T1} /><ArtP d="6,22 22,16 28,26 20,36" c="#9fb8cc" /></>,
  w5: <><ArtP d="4,34 30,3 33,36" c={T1} /><ArtP d="4,34 12,25 33,36" c="#c0e0e8" /><path d="M16 34l2-12" stroke="#2233cc" /><path d="M8 33l5 2" stroke="#e02020" /></>,
  w6: <><path d="M6 14c4-10 24-12 28-4 2 10-8 26-16 26-6-2-14-14-12-22z" fill={T2} /><path d="M16 16l8 20" stroke="#2233cc" /></>,
  w7: <><defs><radialGradient id="sph2" cx="0.5" cy="0.45" r="0.6"><stop offset="0" stopColor="#7fa8c8" /><stop offset="0.5" stopColor="#d8e8ee" /><stop offset="1" stopColor="#8aa9a8" /></radialGradient></defs><ellipse cx="20" cy="20" rx="15" ry="17" fill="url(#sph2)" /><path d="M16 37h8" stroke="#e02020" strokeWidth="2" /></>,
  w8: <><path d="M10 6c16 0 22 14 18 30l-8-2c4-12 0-20-12-22z" fill={T1} /><path d="M24 12c6 6 6 16 4 24l-3-1c3-8 2-16-3-22z" fill="#7d8c8c" /></>,
  w9: <ellipse cx="20" cy="20" rx="17" ry="11" transform="rotate(-35 20 20)" fill="#b8dcd8" />,
  w10: <><ArtP d="18,4 36,4 31,36 3,36" c="#101060" /><path d="M32 5c-8 0-16 10-15 24l15 6z" fill="#bfc6f4" /></>,
};
const SHAPES_TOP = ["Block", "H Block", "Slab", "H Slab", "Slot", "H Slot", "Cylinder", "H Cylinder", "Ellipse", "H Ellipse", "Poly", "H Poly", "Sphere", "H Sphere", "Pie", "H Pie", "Torus", "H Torus", "Cone", "H Cone", "Pyramid", "H Pyramid", "Part Cone", "H Part Cone"];
const SHAPES_LOW = ["w1", "w2", "w3", "w4", "w5", "w6", "w7", "w8", "w9", "w10"];

const LIB_TABS = ["Starter", "Shapes", "Advshaps", "FlexShapes", "SheetMtl", "Tools", "Materials", "Animatn", "Surfaces", "Textures", "Bumps", "Colors", "Steel Frames", "Tank"];
const TOP_TABS = ["Home", "Feature", "Sketch", "Surface", "Assembly", "Sheet Metal", "Tools", "Smart Markup", "Visualization", "Annotation", "Common", "Add-Ins", "Help/Training"];

const PanelControls = () => (
  <PanelBtns>
    <Caret $c="#777" $gap={0} $size={5} />
    <Pin size={12} color="#666" />
    <X size={13} color="#666" strokeWidth={2.4} />
  </PanelBtns>
);

const Tick = () => (
  <svg width="11" height="11" viewBox="0 0 11 11" fill="none">
    <path d="M2 5.500l2.500 3L9 2" stroke="#222" strokeWidth="1.2" />
  </svg>
);

const PT = ({ x, y }) => <circle cx={x} cy={y} r="3.500" fill="#f00000" stroke="#000" strokeWidth="2" />;
const BD = ({ x, y }) => <circle cx={x} cy={y} r="2.500" fill="#1010e0" stroke="#000" strokeWidth="1.500" />;

const Scene = () => (
  <SceneSvg width="1594" height="621" viewBox="326 183 1594 621" fill="none">
    <defs>
      <pattern id="minorDark" x="661.3" y="203.3" width="9.875" height="9.875" patternUnits="userSpaceOnUse">
        <path d="M9.875 0H0V9.875" stroke="#222" strokeWidth="1" />
      </pattern>
      <pattern id="majorDark" x="661.3" y="203.3" width="39.5" height="39.5" patternUnits="userSpaceOnUse">
        <path d="M39.500 0H0V39.500" stroke="#1c1c1c" strokeWidth="1.200" />
      </pattern>
      <pattern id="majorLight" x="661.3" y="203.3" width="39.5" height="39.5" patternUnits="userSpaceOnUse">
        <path d="M39.500 0H0V39.500" stroke="#ffffff" strokeWidth="1" />
      </pattern>
      <linearGradient id="fadeLight" gradientUnits="userSpaceOnUse" x1="0" y1="203" x2="0" y2="500">
        <stop offset="0" stopColor="#fff" stopOpacity="0.42" />
        <stop offset="1" stopColor="#fff" stopOpacity="0.05" />
      </linearGradient>
      <linearGradient id="fadeMinor" gradientUnits="userSpaceOnUse" x1="0" y1="300" x2="0" y2="560">
        <stop offset="0" stopColor="#fff" stopOpacity="0" />
        <stop offset="1" stopColor="#fff" stopOpacity="0.68" />
      </linearGradient>
      <linearGradient id="fadeMajor" gradientUnits="userSpaceOnUse" x1="0" y1="420" x2="0" y2="600">
        <stop offset="0" stopColor="#fff" stopOpacity="0" />
        <stop offset="1" stopColor="#fff" stopOpacity="0.85" />
      </linearGradient>
      <mask id="maskLight" maskUnits="userSpaceOnUse" x="326" y="183" width="1594" height="621"><rect x="326" y="183" width="1594" height="621" fill="url(#fadeLight)" /></mask>
      <mask id="maskMinor" maskUnits="userSpaceOnUse" x="326" y="183" width="1594" height="621"><rect x="326" y="183" width="1594" height="621" fill="url(#fadeMinor)" /></mask>
      <mask id="maskMajor" maskUnits="userSpaceOnUse" x="326" y="183" width="1594" height="621"><rect x="326" y="183" width="1594" height="621" fill="url(#fadeMajor)" /></mask>
      <clipPath id="sketchClip"><path d="M952 275H1080A276.800 276.800 0 0 1 1080 764H952Z" /></clipPath>
    </defs>

    <rect x="661.3" y="203.3" width="750.7" height="601" fill="rgb(180,130,130)" fillOpacity="0.2" />
    <rect x="661.3" y="203.3" width="750.7" height="601" fill="url(#minorDark)" mask="url(#maskMinor)" />
    <rect x="661.3" y="203.3" width="750.7" height="601" fill="url(#majorDark)" mask="url(#maskMajor)" />
    <rect x="661.3" y="203.3" width="750.7" height="601" fill="url(#majorLight)" mask="url(#maskLight)" />
    <path d="M661.5 804V203.500H1412V804" stroke="#fff" strokeOpacity="0.28" />

    <path d="M952 275H1080A276.800 276.800 0 0 1 1080 764H952Z" fill="#b09c94" fillOpacity="0.92" />
    <g clipPath="url(#sketchClip)">
      <rect x="661.3" y="203.3" width="750.7" height="601" fill="url(#minorDark)" opacity="0.72" />
    </g>

    <path d="M938 280V764" stroke="#3c3c3c" strokeOpacity="0.6" strokeWidth="1.500" />
    <path d="M923 764H1080" stroke="#555" strokeWidth="2" />
    <path d="M952 275H1080" stroke="#555" strokeWidth="2" />
    <path d="M952 770V804" stroke="#555" />
    <path d="M952 438A326 326 0 0 0 628.600 804" stroke="#555" strokeWidth="1.500" />

    <path d="M608 519H1468" stroke="#2fd62f" strokeDasharray="30 4 4 4" />
    <path d="M1016.700 183V804" stroke="#f00000" strokeDasharray="26 3 3 3" />
    <path d="M1016.700 370V675" stroke="#f00000" strokeOpacity="0.5" />
    <path d="M1016.700 523V540" stroke="#f00000" strokeWidth="3" />
    <path d="M1012 542h9.400l-4.700 8zM1012.700 372h8l-4-9zM1012.700 667h8l-4 8z" fill="#f00000" />
    <path d="M1012 554l9.400 10M1021.400 554l-9.400 10" stroke="#f00000" />

    <path d="M952 361.700H1386M1041 519.300H1386M952 677.300H1386" stroke="#00f000" strokeWidth="3" />
    <path d="M952 275V764" stroke="#ffff00" strokeWidth="3" />

    <path d="M1080 274A276.800 276.800 0 0 1 1080 764" stroke="#0a84f0" strokeWidth="3" />
    <path d="M1061.700 309A235.800 235.800 0 0 1 1061.700 728" stroke="#0a84f0" strokeWidth="3" />

    <path d="M1144 702L1125 684M1125 684l1 7M1125 684l7 1" stroke="#f00000" strokeWidth="1.300" />

    <path d="M1169 369v10M1168.600 683v10" stroke="#0000a0" strokeWidth="2" />
    <path d="M1200 503v10M1195 513h10M1239 503v10M1234 513h10" stroke="#0000a0" strokeWidth="2" />
    <path d="M1164 532l4 4M1169 527v9M1166 536h8M1166 531h6" stroke="#f00000" />
    <path d="M1236 521l4 3h5M1236 525l4 3h5" stroke="#f00000" />
    <path d="M1382 511h8M1383 511l5-6" stroke="#f00000" strokeWidth="1.500" />

    <PT x={952} y={274} /><PT x={1080} y={274} /><PT x={1061.7} y={309} />
    <PT x={952} y={361.5} /><PT x={1386} y={361.5} /><PT x={1386} y={519.3} />
    <PT x={952} y={677} /><PT x={1386} y={677} /><PT x={1061.7} y={728} />
    <PT x={952} y={764} /><PT x={1080} y={764} />
    <BD x={922} y={275} /><BD x={952.7} y={437.7} /><BD x={923} y={764.5} />

    <path d="M362 764V748" stroke="#2030c0" strokeWidth="1.500" />
    <path d="M359 752l3-7 3 7z" fill="#2030c0" />
    <path d="M362 766h14" stroke="#d02020" strokeWidth="1.500" />
    <path d="M374 763l6 3-6 3z" fill="#d02020" />
    <circle cx="362" cy="767" r="1.500" fill="#20c020" />
    <text x="361" y="742" fontSize="8" fill="#3040c0" fontFamily="Liberation Sans">Z</text>
    <text x="389" y="770" fontSize="8" fill="#d02020" fontFamily="Liberation Sans">X</text>
  </SceneSvg>
);

export default function App() {
  return (
    <>
      <GlobalStyle />
      <Shell>
        <TitleBar>
          <QuickBar>
            {QUICK.map((q) => (
              <QuickBtn key={q.k} $faded={q.faded} $on={q.on} $w={q.w}>
                <Svg>{q.art}</Svg>
              </QuickBtn>
            ))}
            <QuickBtn $w={18}>
              <Caret $c="#fff" $gap={0} />
            </QuickBtn>
          </QuickBar>
          <WindowTitle>IRONCAD 2020 (NFR) - [Scene2*]</WindowTitle>
          <WindowBtns>
            <WinBtn><Minus size={10} color="#fff" strokeWidth={3} /></WinBtn>
            <WinBtn><Copy size={10} color="#fff" strokeWidth={2.4} /></WinBtn>
            <WinBtn><X size={12} color="#fff" strokeWidth={2.4} /></WinBtn>
          </WindowBtns>
        </TitleBar>

        <TabBar>
          <RibbonTab $mr={2}>Menu</RibbonTab>
          {TOP_TABS.map((t) => (
            <RibbonTab key={t} $active={t === "Sketch"}>{t}</RibbonTab>
          ))}
          <CommandSearch>
            <Lightbulb size={13} color="#c5d2e6" />
            Search Commands...
          </CommandSearch>
          <TabRight>
            Styles
            <Caret $c="#fff" $gap={9} />
            <HelpDot>?</HelpDot>
            <Caret $c="#fff" $gap={0} />
            <WinBtn $w={24}><Minus size={8} color="#fff" strokeWidth={3} /></WinBtn>
            <WinBtn $w={16}><Copy size={9} color="#fff" strokeWidth={2.4} /></WinBtn>
            <WinBtn $w={22}><X size={11} color="#fff" strokeWidth={2.4} /></WinBtn>
          </TabRight>
        </TabBar>

        <Ribbon>
          <Group $w={54}>
            <GroupBody $pad={2}>
              <BigCmd $w={52}>
                <BigIcon>
                  <svg width="34" height="40" viewBox="0 0 34 40" fill="none">
                    <path d="M4 18l12 10L30 8" stroke="#1fa84a" strokeWidth="4.500" />
                  </svg>
                </BigIcon>
                Finish
                <Caret $gap={0} $mt={5} />
              </BigCmd>
            </GroupBody>
            <GroupLabel>Sketch</GroupLabel>
          </Group>
          <Group $w={470}>
            <GroupBody $pad={10}><CmdCols cols={DRAWING} /></GroupBody>
            <GroupLabel>Drawing</GroupLabel>
          </Group>
          <Group $w={347}>
            <GroupBody $pad={9}><CmdCols cols={MODIFY} /></GroupBody>
            <GroupLabel>Modify</GroupLabel>
          </Group>
          <Group $w={569}>
            <GroupBody $pad={6}>
              <BigCmd $w={74}>
                <BigIcon>
                  <svg width="40" height="40" viewBox="0 0 40 40" fill="none">
                    <path d="M7 10l26 24" stroke="#222" strokeWidth="1.500" />
                    <path d="M14 6l21 21" stroke="#e0242a" strokeWidth="1.300" />
                    <path d="M14 6l1 5M14 6l5 1M35 27l-1-5M35 27l-5-1" stroke="#e0242a" strokeWidth="1.300" />
                    <path d="M7 10l7-4M33 34l2-7" stroke="#e0242a" />
                    <rect x="18" y="13" width="8" height="5" fill="#fff" stroke="#e0242a" />
                  </svg>
                </BigIcon>
                Smart
                <span>Dimension<Caret $c="#444" $gap={3} /></span>
              </BigCmd>
              <CmdCols cols={CONSTRAINTS} />
            </GroupBody>
            <GroupLabel>Constraints</GroupLabel>
          </Group>
          <Group $w={51}>
            <GroupBody $pad={2}>
              <BigCmd $w={50}>
                <BigIcon>
                  <svg width="40" height="40" viewBox="0 0 40 40" fill="none">
                    <path d="M10 5v13M4 12h13M5 7l10 10M15 7L5 17" stroke="#e0b020" strokeWidth="1.300" />
                    <path d="M8 30L27 13" stroke="#d8182a" strokeWidth="2" />
                    <path d="M22 12l7-1-1 7z" fill="#d8182a" />
                    <path d="M5 27l6 6" stroke="#d8182a" strokeWidth="1.500" />
                    <path d="M14 35l21-20" stroke="#111" strokeWidth="2" />
                  </svg>
                </BigIcon>
                Display
                <Caret $gap={0} $mt={5} />
              </BigCmd>
            </GroupBody>
            <GroupLabel>Display</GroupLabel>
          </Group>
        </Ribbon>

        <DocStrip>
          <DocTab $w={74} $pl={34}><DocText>Scene1*</DocText></DocTab>
          <DocTab $w={106} $active $pl={33}>
            <DocText>Scene2*</DocText>
            <DocClose><X size={12} color="#666" strokeWidth={2} /></DocClose>
          </DocTab>
          <StripCaret $top={11}><Caret $c="#777" $gap={0} $size={4} /></StripCaret>
        </DocStrip>

        <Work>
          <LeftStrip>
            <ToolColumn>
              <ToolDots />
              <ToolBtn><Ghost d={<path d="M2 5h9v9H2zM2 5l3-3h9v9l-3 3M11 5l3-3" />} /></ToolBtn>
              <ToolBtn><Ghost d={GhostBox} /></ToolBtn>
              <ToolSep />
              <ToolBtn><Ghost d={GhostBox} /></ToolBtn>
              <ToolBtn><Ghost d={GhostBox} /></ToolBtn>
              <ToolBtn><Ghost d={GhostBox} /></ToolBtn>
              <ToolArrow />
              <ToolDots $mb={1} />
              <ToolBtn><Cube faces={["front"]} /></ToolBtn>
              <ToolBtn><Cube faces={["top"]} /></ToolBtn>
              <ToolBtn><Cube faces={["left"]} /></ToolBtn>
              <ToolBtn><Cube faces={["right"]} /></ToolBtn>
              <ToolBtn><Cube faces={["back"]} /></ToolBtn>
              <ToolBtn><Cube faces={["bottom"]} /></ToolBtn>
              <ToolBtn><Cube faces={["front", "top", "left"]} /></ToolBtn>
              <ToolBtn><Cube faces={["front", "top"]} /></ToolBtn>
              <ToolBtn><Cube faces={["left", "front"]} /></ToolBtn>
              <ToolBtn><Cube faces={["front", "right"]} /></ToolBtn>
              <ToolArrow />
              <ToolDots />
              <ToolBtn><Ghost d={<path d="M3 3l10 10M1 5l4-4M11 15l4-4" />} /></ToolBtn>
              <ToolBtn><Ghost d={<path d="M1 4h14M1 10h14M3 4v6M13 4v6" />} /></ToolBtn>
              <ToolBtn><Ghost d={<path d="M3 2h6M3 14h6M6 2v12" />} /></ToolBtn>
              <ToolBtn><Ghost d={<path d="M1 14L8 2l6 12z" />} /></ToolBtn>
              <ToolBtn><Ghost d={<><circle cx="8" cy="8" r="7" /><path d="M4 4l8 8" /></>} /></ToolBtn>
              <ToolBtn><Ghost d={<><circle cx="8" cy="8" r="7" /><path d="M4 4l8 8M6 3l8 8" /></>} /></ToolBtn>
              <ToolSep />
              <ToolBtn><Ghost d={<path d="M1 14l6-7 4-3M12 2l2 6" />} /></ToolBtn>
              <ToolBtn><Ghost d={<rect x="4" y="1" width="8" height="14" fill="#d8d8d8" />} /></ToolBtn>
              <ToolArrow />
            </ToolColumn>
          </LeftStrip>

          <Content>
            <TopRow>
              <PropsPanel>
                <PanelHead $c={LINK}>
                  Properties
                  <PanelControls />
                </PanelHead>
                <PropsBody>
                  <SectionHead $plain><Tri />Message</SectionHead>
                  <SectionHead $mt={5} $h={19}><Tri $open />Actions</SectionHead>
                  <ActionBar>
                    {ACTIONS.map((n, i) => (
                      <Ico key={i} n={n} />
                    ))}
                  </ActionBar>
                  <SectionHead $mt={11} $h={19}><Tri $open />Property</SectionHead>
                  <FieldRow $bold>
                    <FieldLabel>Length(mm)</FieldLabel>
                    <FieldBox><Selected>124</Selected></FieldBox>
                  </FieldRow>
                  <FieldRow>
                    <FieldLabel>Angle(deg)</FieldLabel>
                    <FieldBox>180</FieldBox>
                  </FieldRow>
                  <FieldRow>
                    <FieldLabel>Start Point(mm)</FieldLabel>
                    <FieldBox>-62.000 16.248</FieldBox>
                  </FieldRow>
                  <FieldRow>
                    <FieldLabel>End Point(mm)</FieldLabel>
                    <FieldBox>62.000 16.248</FieldBox>
                  </FieldRow>
                  <CheckGroup>
                    <CheckRow><Check />Use as Construction</CheckRow>
                    <CheckRow $off><Check $off />Use as Center Line</CheckRow>
                    <CheckRow><Check><Tick /></Check>Reverse Curve Dimension Direction</CheckRow>
                  </CheckGroup>
                  <SectionHead $mt={8} $h={19}><Tri $open />Constraints</SectionHead>
                  <ConstraintBox>
                    <BoxHead>Available Constraints</BoxHead>
                    {["Horizontal", "Vertical", "Fixed Position", "Lock Start Point", "Lock End Point"].map((t) => (
                      <BoxRow key={t}><Check />{t}</BoxRow>
                    ))}
                  </ConstraintBox>
                </PropsBody>
                <PanelTabs>
                  <PanelTab $pl={1}>
                    <Svg s={14}>
                      <path d="M8 2L3 14h10z" stroke="#7fb0a8" />
                      <path d="M5 10h6M6.500 6h3" stroke="#7fb0a8" />
                    </Svg>
                    Scene
                  </PanelTab>
                  <PanelTab $active>
                    <Svg s={14}>
                      <rect x="3" y="1" width="10" height="14" stroke="#888" />
                      <rect x="4" y="2" width="6" height="6" fill="#2b5fa8" />
                      <path d="M5 11h6M5 13h6" stroke="#666" />
                    </Svg>
                    Properties
                  </PanelTab>
                  <PanelTab $pl={3}>
                    <Search size={15} color="#5b93c3" />
                    Search
                  </PanelTab>
                </PanelTabs>
              </PropsPanel>

              <Viewport>
                <Scene />
                <DimLabel $x={963} $y={499} $w={78}><DimText $c="#f00000">40.000</DimText></DimLabel>
                <DimLabel $x={893} $y={508} $w={88}><DimText>124.000</DimText></DimLabel>
                <DimLabel $x={1098} $y={702} $w={76}><DimText $c="#f00000">10.000</DimText></DimLabel>
                <DimLabel $x={582} $y={752} $w={88}><DimText>180.000</DimText></DimLabel>
                <SceneSvg $top width="1594" height="621" viewBox="326 183 1594 621" fill="none">
                  <path d="M935 519h10" stroke="#0000a0" strokeWidth="1.500" />
                  <path d="M962 519l5-4M962 519l5 4" stroke="#f00000" />
                </SceneSvg>
              </Viewport>
            </TopRow>

            <ShapesPanel>
              <PanelHead $h={27}>
                Shapes
                <PanelControls />
              </PanelHead>
              <ButtonRow>
                <LibButton>
                  <LibIcon>
                    <Svg s={14}><rect x="3" y="1" width="10" height="14" fill="#f4f4f4" stroke="#777" /><g fill="#777"><rect x="5" y="4" width="2" height="2" /><rect x="9" y="4" width="2" height="2" /><rect x="5" y="9" width="2" height="2" /><rect x="9" y="9" width="2" height="2" /></g></Svg>
                  </LibIcon>
                  New
                </LibButton>
                <LibButton>
                  <LibIcon><Svg s={14}><path d="M3 1h8l2 2v12H3z" fill="#f4f4f4" stroke="#888" /><path d="M10 1v14" stroke="#888" /></Svg></LibIcon>
                  Open
                </LibButton>
                <LibButton>
                  <LibIcon><Svg s={14}><rect x="2" y="3" width="11" height="12" fill="#6a6a4a" /><rect x="5" y="4" width="5" height="4" fill="#eee" /><rect x="5" y="11" width="4" height="4" fill="#ddd" /></Svg></LibIcon>
                  Save
                </LibButton>
                <LibButton>
                  <LibIcon><Svg s={14}><path d="M2 1h9v14H2z" fill="#f4f4f4" stroke="#999" /><path d="M11 7l3 5-3 2" stroke="#c4b890" /></Svg></LibIcon>
                  Close
                </LibButton>
              </ButtonRow>
              <SearchRow>
                <BackBtn>
                  <svg width="12" height="12" viewBox="0 0 12 12"><path d="M0 6l5-5v3h7v4H5v3z" fill="#9a9a9a" /></svg>
                </BackBtn>
                <SearchText>Search ...</SearchText>
                <ClearBtn><X size={16} color="#f0502a" strokeWidth={2.4} /></ClearBtn>
              </SearchRow>
              <ShapeArea>
                <ShapeGrid>
                  {SHAPES_TOP.map((n) => (
                    <ShapeItem key={n}>
                      <ShapeArt width="40" height="40" viewBox="0 0 40 40" fill="none">{ART[n]}</ShapeArt>
                      {n}
                    </ShapeItem>
                  ))}
                  {SHAPES_LOW.map((n) => (
                    <ShapeItem key={n}>
                      <ShapeArt width="40" height="40" viewBox="0 0 40 40" fill="none">{ART[n]}</ShapeArt>
                    </ShapeItem>
                  ))}
                </ShapeGrid>
                <ScrollBar>
                  <ScrollArrow><svg width="10" height="8" viewBox="0 0 10 8" fill="none"><path d="M1 6l4-4 4 4" stroke="#555" strokeWidth="1.600" /></svg></ScrollArrow>
                  <ScrollThumb />
                  <ScrollArrow $end><svg width="10" height="8" viewBox="0 0 10 8" fill="none"><path d="M1 2l4 4 4-4" stroke="#555" strokeWidth="1.600" /></svg></ScrollArrow>
                </ScrollBar>
              </ShapeArea>
              <LibTabs>
                {LIB_TABS.map((t) => (
                  <LibTab key={t} $active={t === "Shapes"}>{t}</LibTab>
                ))}
                <StripCaret $top={9}><Caret $c="#777" $gap={0} $size={4} /></StripCaret>
              </LibTabs>
            </ShapesPanel>
          </Content>
        </Work>

        <StatusBar>
          Select an edge or face to project.&nbsp; Right click to create associativity constraints.
          <StatusRight>
            <StatusCell $w={150} $left $tight>X: -84.629 Y: 157.977 Z: 0.000</StatusCell>
            <StatusCell $w={31}><Svg><path d="M9 1h4v14H9z" fill="#e8c040" /><path d="M3 3h3v3H3z" stroke="#c09020" /></Svg></StatusCell>
            <StatusCell $w={42} $left>Units:</StatusCell>
            <StatusCell $w={52} $left>mm, deg</StatusCell>
            <StatusCell $w={23}><Search size={15} color="#8a8a8a" /></StatusCell>
            <StatusCell $w={23}><Search size={15} color="#8a8a8a" /></StatusCell>
            <StatusCell $w={12}><Caret $gap={0} /></StatusCell>
            <StatusCell $w={24}><Svg><rect x="2" y="5" width="9" height="9" fill="#f5d020" stroke="#a08a2a" /><path d="M2 5l3-3h9v9l-3 3" fill="#ddd" stroke="#888" /><circle cx="14" cy="8" r="1.200" fill="#e0242a" /></Svg></StatusCell>
            <StatusCell $w={10}><Caret $gap={0} /></StatusCell>
            <StatusCell $w={26}><Cube faces={["front"]} /></StatusCell>
            <StatusCell $w={10}><Caret $gap={0} /></StatusCell>
            <StatusCell $w={26}><Svg><rect x="6" y="3" width="6" height="12" fill="#555" /><circle cx="8" cy="3" r="2" fill="#3f82c8" /><path d="M1 8h4" stroke="#888" strokeDasharray="1 1" /></Svg></StatusCell>
            <StatusCell $w={10}><Caret $gap={0} /></StatusCell>
            <StatusCell $w={24}><Svg><path d="M2 6l9-5v10l-9 5z" fill="#86a9d4" stroke="#5b7faa" /></Svg></StatusCell>
            <StatusCell $w={22}><Glasses size={16} color="#8a8a8a" /></StatusCell>
            <StatusCell $w={8}><Caret $gap={0} /></StatusCell>
            <StatusCell $w={26}><Cube faces={["front", "top", "right"]} /></StatusCell>
            <StatusCell $w={10}><Caret $gap={0} /></StatusCell>
            <StatusCell $w={26}><Svg><path d="M3 7h7v8H3zM6 2h7v8h-3" fill="#6a8cc0" stroke="#4a6a9a" /></Svg></StatusCell>
            <StatusCell $w={8}><Caret $gap={0} /></StatusCell>
            <StatusCell $w={24}><MousePointer2 size={14} color="#bbbbbb" /></StatusCell>
            <StatusCell $w={24}><MousePointer2 size={15} color="#555" /></StatusCell>
            <StatusCell $w={26}><MousePointer2 size={13} color="#cccccc" /></StatusCell>
            <SelectBox $w={90}>Any<Caret $gap={0} $c="#bbb" /></SelectBox>
            <SelectBox $w={66}>Default<Caret $gap={0} $c="#bbb" /></SelectBox>
            <StatusCell $w={25}><Svg><rect x="6" y="1" width="4" height="4" fill="#e0242a" /><path d="M8 5v3M3 8h10v2M3 8v2" stroke="#666" /><rect x="1" y="10" width="5" height="5" fill="#5b93d3" /><rect x="10" y="10" width="5" height="5" fill="#e8c040" /></Svg></StatusCell>
          </StatusRight>
        </StatusBar>
      </Shell>
    </>
  );
}
